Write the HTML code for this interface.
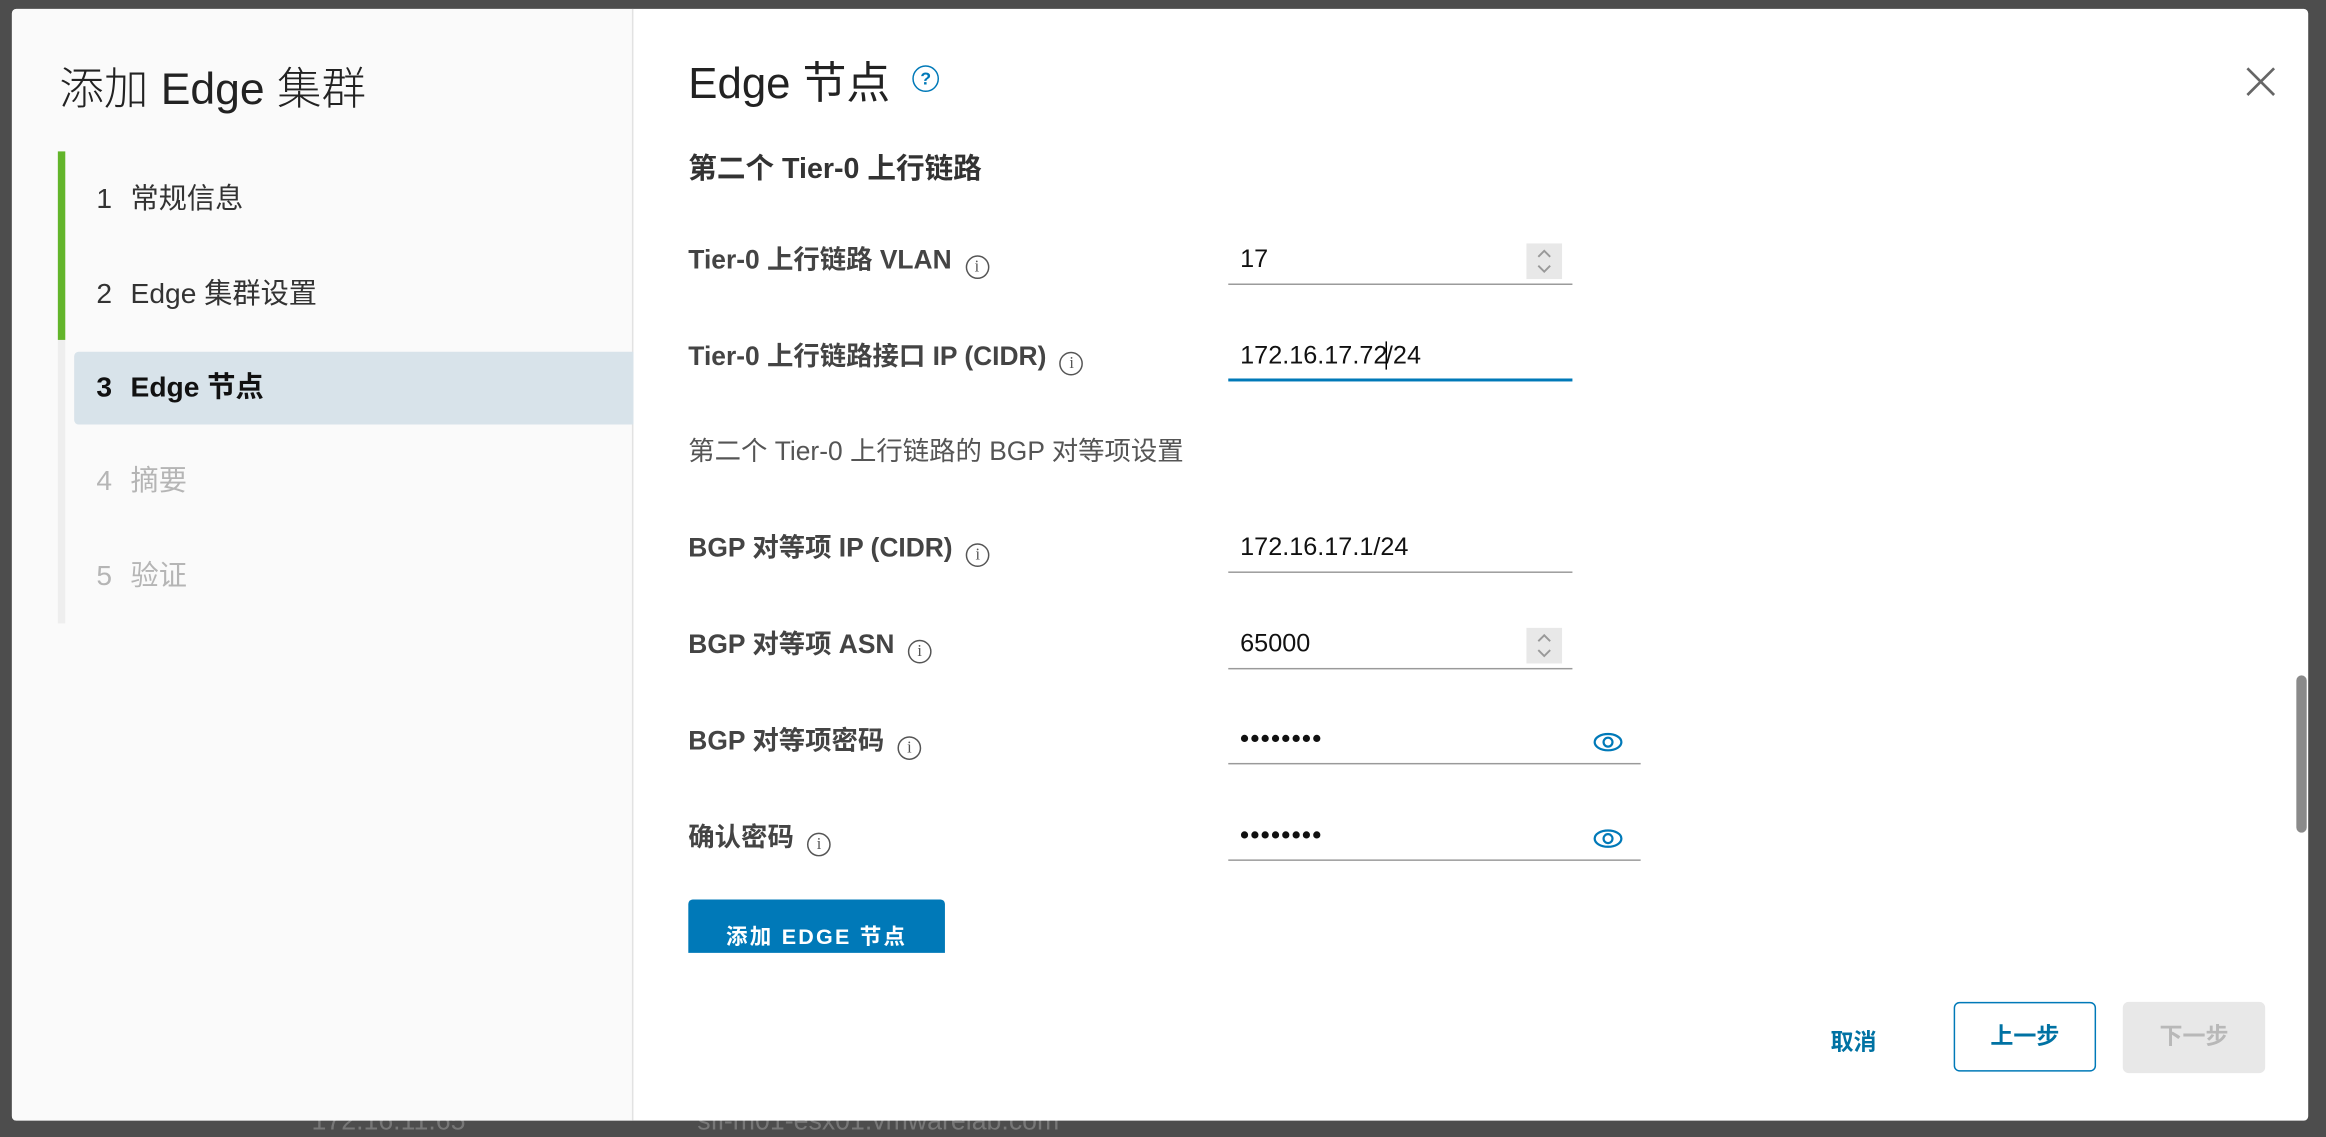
<!DOCTYPE html>
<html><head><meta charset="utf-8">
<style>
html,body{margin:0;padding:0;background:#4d4d4d;overflow:hidden;width:2326px;height:1134px}
#s{position:absolute;left:0;top:0;width:1568px;height:764px;transform:scale(1.48342,1.48429);transform-origin:0 0;font-family:"Liberation Sans","Noto Sans CJK SC",sans-serif;}
.a{position:absolute}
.modal{left:8px;top:6px;width:1548px;height:749px;background:#fff;border-radius:3px;overflow:hidden}
.left{left:0;top:0;width:418px;height:749px;background:#fafafa;border-right:1px solid #e2e2e2}
.step{position:absolute;left:57px;font-size:19px;color:#333;line-height:22px}
.step span{display:inline-block;width:23px}
.lab{position:absolute;left:456px;font-size:17.8px;font-weight:bold;color:#444;line-height:22px}
.info{display:inline-block;width:14px;height:14px;border:1.4px solid #555;border-radius:50%;font-size:11px;line-height:14px;text-align:center;font-weight:normal;color:#555;margin-left:9px;vertical-align:-2px;font-family:"Liberation Serif",serif}
.inp{position:absolute;left:820px;width:232px;height:30px;border-bottom:1.5px solid #9a9a9a;font-size:17px;color:#111;line-height:26px;box-sizing:border-box;padding-left:8px}
.spin{position:absolute;right:7px;top:2px;width:24px;height:24px;background:#e8e8e8}
</style></head><body>
<div id="s">
<div class="a" style="left:210px;top:745px;color:#777;font-size:18px">172.16.11.65</div>
<div class="a" style="left:470px;top:745px;color:#777;font-size:18px">sfi-m01-esx01.vmwarelab.com</div>
<div class="a modal">
 <div class="a left">
  <div class="a" style="left:32px;top:29px;font-size:30px;color:#222;font-weight:300">添加 Edge 集群</div>
  <div class="a" style="left:31px;top:96px;width:5px;height:318px;background:#eee"></div>
  <div class="a" style="left:31px;top:96px;width:5px;height:127px;background:#62b52a"></div>
  <div class="a" style="left:42px;top:231px;width:377px;height:49px;background:#d8e3ea;border-radius:3px 0 0 3px"></div>
  <div class="step" style="top:118px"><span>1</span>常规信息</div>
  <div class="step" style="top:182px"><span>2</span>Edge 集群设置</div>
  <div class="step" style="top:245px;font-weight:bold;color:#111"><span>3</span>Edge 节点</div>
  <div class="step" style="top:308px;color:#b5b5b5"><span>4</span>摘要</div>
  <div class="step" style="top:372px;color:#b5b5b5"><span>5</span>验证</div>
 </div>
 <div class="a" style="left:456px;top:27px;font-size:29.5px;color:#222">Edge 节点</div>
 <div class="a" style="left:607px;top:38px;width:16px;height:16px;border:1.5px solid #0079b8;border-radius:50%;color:#0079b8;font-size:12px;line-height:16px;text-align:center;font-weight:bold">?</div>
 <svg class="a" style="left:1506px;top:39px" width="20" height="20"><path d="M1 1L19 19M19 1L1 19" stroke="#666" stroke-width="1.8"/></svg>
 <div class="a" style="left:0;top:0;width:1548px;height:636px;overflow:hidden">
  <div class="a" style="left:456px;top:92px;font-size:19.3px;font-weight:bold;color:#333">第二个 Tier-0 上行链路</div>
  <div class="lab" style="top:158px">Tier-0 上行链路 VLAN<span class="info">i</span></div>
  <div class="lab" style="top:223px">Tier-0 上行链路接口 IP (CIDR)<span class="info">i</span></div>
  <div class="lab" style="top:287px;font-weight:normal;color:#555">第二个 Tier-0 上行链路的 BGP 对等项设置</div>
  <div class="lab" style="top:352px">BGP 对等项 IP (CIDR)<span class="info">i</span></div>
  <div class="lab" style="top:417px">BGP 对等项 ASN<span class="info">i</span></div>
  <div class="lab" style="top:482px">BGP 对等项密码<span class="info">i</span></div>
  <div class="lab" style="top:547px">确认密码<span class="info">i</span></div>
  <div class="inp" style="top:156px">17<div class="spin"><svg width="24" height="24"><path d="M8 9L12 5L16 9M8 15L12 19L16 15" fill="none" stroke="#999" stroke-width="1.3"/></svg></div></div>
  <div class="inp" style="top:221px;border-bottom:2px solid #0079b8">172.16.17.72<span style="border-left:1px solid #000;margin:0 -1px"></span>/24</div>
  <div class="inp" style="top:350px">172.16.17.1/24</div>
  <div class="inp" style="top:415px">65000<div class="spin"><svg width="24" height="24"><path d="M8 9L12 5L16 9M8 15L12 19L16 15" fill="none" stroke="#999" stroke-width="1.3"/></svg></div></div>
  <div class="inp" style="top:479px;width:278px;letter-spacing:1px;font-weight:bold">••••••••</div>
  <div class="inp" style="top:544px;width:278px;letter-spacing:1px;font-weight:bold">••••••••</div>
  <svg class="a" style="left:1066px;top:487px" width="20" height="14"><ellipse cx="10" cy="7" rx="9" ry="5.5" fill="none" stroke="#0079b8" stroke-width="1.5"/><circle cx="10" cy="7" r="3" fill="none" stroke="#0079b8" stroke-width="1.5"/></svg>
  <svg class="a" style="left:1066px;top:552px" width="20" height="14"><ellipse cx="10" cy="7" rx="9" ry="5.5" fill="none" stroke="#0079b8" stroke-width="1.5"/><circle cx="10" cy="7" r="3" fill="none" stroke="#0079b8" stroke-width="1.5"/></svg>
  <div class="a" style="left:456px;top:600px;width:173px;height:48px;background:#0079b8;border-radius:3px;color:#fff;font-weight:bold;font-size:14.5px;letter-spacing:1.5px;text-align:center;line-height:52px">添加 EDGE 节点</div>
 </div>
 <div class="a" style="left:1540px;top:449px;width:7px;height:106px;background:#8a8a8a;border-radius:4px"></div>
 <div class="a" style="left:1226px;top:684px;color:#0072a3;font-weight:bold;font-size:15.5px">取消</div>
 <div class="a" style="left:1309px;top:669px;width:94px;height:45px;border:1.5px solid #0079b8;border-radius:4px;color:#0072a3;font-weight:bold;font-size:15.5px;text-align:center;line-height:45px">上一步</div>
 <div class="a" style="left:1423px;top:669px;width:96px;height:48px;background:#e8e8e8;border-radius:4px;color:#b8b8b8;font-weight:bold;font-size:15.5px;text-align:center;line-height:48px">下一步</div>
</div>
</div>
</body></html>
